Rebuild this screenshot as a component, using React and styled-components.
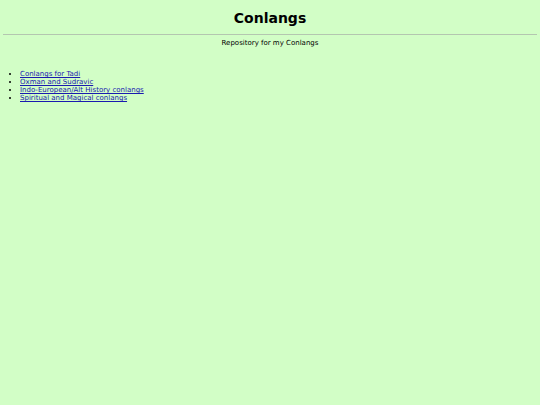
import React from 'react'
import styled, { createGlobalStyle } from 'styled-components';

const GlobalStyle = createGlobalStyle`
  html, body {
    margin: 0;
    background-color: #d2fec6;
  }
  body {
    padding: 4px 3px;
    font-family: "DejaVu Sans", Verdana, sans-serif;
    font-size: 7px;
    color: #000;
  }
`;

const Title = styled.h1`
  text-align: center;
  font-size: 14px;
  font-weight: bold;
  margin: 6px 0 8px;
  line-height: 16px;
`;

const Rule = styled.hr`
  border: none;
  border-top: 1px solid #b4c6b0;
  margin: 0;
`;

const Tagline = styled.p`
  text-align: center;
  margin: 4px 0 0;
  line-height: 8px;
`;

const LinkList = styled.ul`
  margin: 23px 0 0;
  padding-left: 17px;
  list-style: disc;
  line-height: 8px;
`;

const Item = styled.li``;

const Link = styled.a`
  color: #1a1ab0;
  text-decoration: underline;
`;

const links = [
  'Conlangs for Tadi',
  'Oxman and Sudravic',
  'Indo-European/Alt History conlangs',
  'Spiritual and Magical conlangs',
];

const App = () => (
  <>
    <GlobalStyle />
    <Title>Conlangs</Title>
    <Rule />
    <Tagline>Repository for my Conlangs</Tagline>
    <LinkList>
      {links.map(name => (
        <Item key={name}><Link href="#">{name}</Link></Item>
      ))}
    </LinkList>
  </>
)

export default App
